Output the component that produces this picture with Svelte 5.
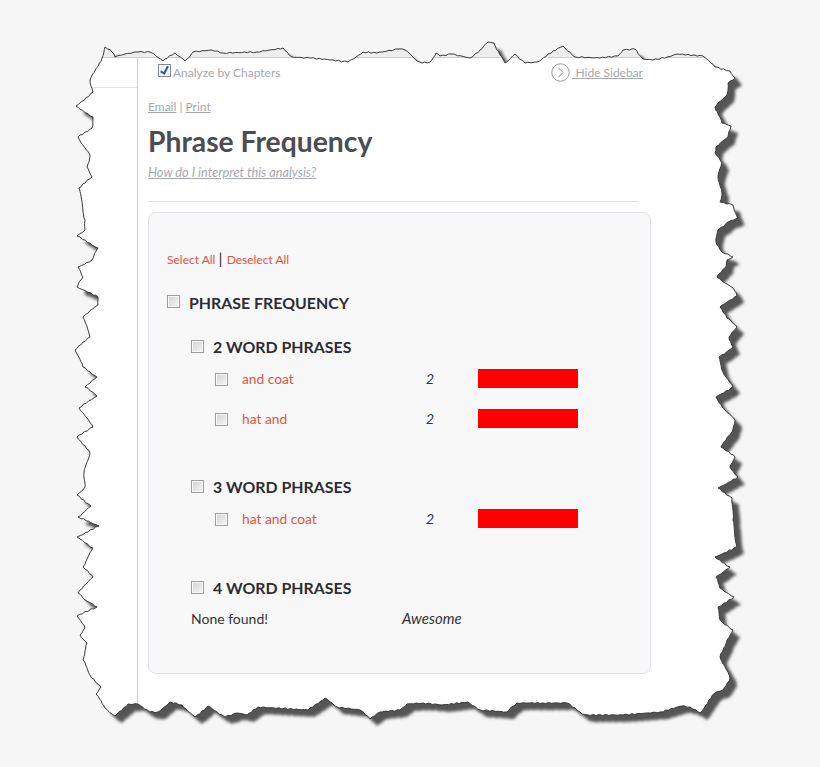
<script>
  const outline = [[105,47],[112,52],[115,57],[125,54],[138,52],[150,52],[163,61],[175,53],[185,61],[193,52],[212,50],[223,53],[257,52],[283,48],[292,57],[310,58],[333,60],[348,62],[363,52],[377,53],[398,49],[405,50],[410,54],[417,61],[422,63],[430,62],[436,53],[440,56],[452,54],[470,58],[480,50],[488,42],[494,43],[500,55],[505,63],[515,54],[525,63],[538,62],[548,54],[563,46],[575,57],[600,58],[618,56],[623,50],[635,49],[643,59],[653,60],[667,57],[677,54],[703,56],[715,67],[730,71],[735,78],[728,83],[727,95],[715,107],[722,123],[731,126],[728,137],[716,147],[715,153],[722,163],[718,177],[722,193],[720,202],[733,205],[738,218],[728,222],[718,230],[716,242],[722,252],[733,257],[727,260],[726,267],[717,277],[725,283],[733,288],[737,296],[720,307],[727,318],[737,327],[729,337],[733,347],[719,357],[723,372],[733,387],[716,397],[725,410],[735,420],[732,432],[721,447],[735,457],[730,467],[738,477],[718,488],[732,498],[733,520],[737,547],[715,557],[730,567],[716,577],[720,588],[734,597],[718,607],[720,620],[733,630],[727,640],[720,657],[728,672],[730,678],[723,690],[715,693],[700,713],[690,707],[682,706],[660,712],[623,715],[588,715],[582,714],[567,703],[543,703],[517,703],[507,712],[480,710],[468,702],[442,705],[423,703],[407,704],[400,710],[380,712],[370,719],[360,710],[337,707],[325,698],[308,710],[258,707],[247,715],[237,713],[225,717],[208,706],[195,717],[182,705],[170,702],[158,712],[150,712],[138,704],[128,704],[115,716],[105,708],[96,694],[101,687],[90,675],[83,660],[87,643],[80,635],[85,628],[77,616],[97,607],[85,600],[78,593],[93,577],[83,567],[93,548],[77,537],[99,526],[78,517],[91,506],[77,495],[85,487],[84,473],[90,453],[77,437],[93,427],[79,408],[97,396],[85,387],[97,377],[83,367],[75,350],[90,337],[83,317],[98,305],[98,297],[77,287],[83,277],[78,267],[92,260],[98,248],[77,236],[85,230],[85,220],[79,188],[92,177],[87,167],[90,155],[78,137],[92,128],[93,117],[76,106],[93,92],[90,80],[102,58]];

  function rough(points) {
    let d = '';
    let seed = 1;
    points.forEach((p, i) => {
      const q = points[(i + 1) % points.length];
      const steps = Math.max(1, Math.round(Math.hypot(q[0] - p[0], q[1] - p[1]) / 3));
      for (let s = 0; s < steps; s++) {
        const t = s / steps;
        seed += 1;
        const nx = s === 0 ? 0 : Math.sin(seed * 12.9898) * 0.6;
        const ny = s === 0 ? 0 : Math.sin(seed * 78.233) * 0.6;
        const x = p[0] + (q[0] - p[0]) * t + nx;
        const y = p[1] + (q[1] - p[1]) * t + ny;
        d += (d ? 'L' : 'M') + x.toFixed(1) + ' ' + y.toFixed(1);
      }
    });
    return d + 'Z';
  }
  const edge = rough(outline);

  const groups = [
    { title: '2 WORD PHRASES', rows: ['and coat', 'hat and'] },
    { title: '3 WORD PHRASES', rows: ['hat and coat'] },
    { title: '4 WORD PHRASES', rows: [] }
  ];
</script>

<div class="page">
  <svg class="paper" width="820" height="767" viewBox="0 0 820 767" aria-hidden="true">
    <defs>
      <filter id="soft" x="-5%" y="-5%" width="110%" height="110%"><feGaussianBlur stdDeviation="1.6" /></filter>
      <clipPath id="sheet"><path d={edge} /></clipPath>
    </defs>
    <path d={edge} transform="translate(7 7)" fill="#555" filter="url(#soft)" />
    <path d={edge} fill="#fff" />
    <g clip-path="url(#sheet)">
      <rect x="60" y="30" width="700" height="27" fill="#ededed" />
      <rect x="60" y="57" width="700" height="1" fill="#cfcfcf" />
    </g>
    <path d={edge} fill="none" stroke="#383838" stroke-width="1" />
  </svg>

  <div class="sheet">
    <aside class="sidebar"><div class="sidebar-head"></div></aside>
    <main class="main">
      <div class="toolbar">
        <label class="analyze"><input class="check" type="checkbox" checked /><span>Analyze by Chapters</span></label>
        <a class="hide" href="#hide">
          <svg width="19" height="19" viewBox="0 0 19 19" aria-hidden="true">
            <circle cx="9.5" cy="9.5" r="8.7" fill="#fff" stroke="#9a9a9a" stroke-width="1" />
            <path d="M7.5 4.8 L12 9.5 L7.5 14.2" fill="none" stroke="#8a8a8a" stroke-width="1" />
          </svg>
          <span class="hide-text">&nbsp;Hide Sidebar</span>
        </a>
      </div>
      <div class="links"><a href="#email">Email</a> | <a href="#print">Print</a></div>
      <h1>Phrase Frequency</h1>
      <a class="help" href="#help">How do I interpret this analysis?</a>
      <hr />
      <section class="panel">
        <div class="select"><a href="#all">Select All</a> <span class="bar-sep">|</span> <a href="#none">Deselect All</a></div>
        <div class="heading top"><input class="check" type="checkbox" /><span>PHRASE FREQUENCY</span></div>
        {#each groups as g, i}
          <div class="group" class:first={i === 0} class:last={i === 2}>
            <div class="heading"><input class="check" type="checkbox" /><span>{g.title}</span></div>
            {#each g.rows as r}
              <div class="row">
                <input class="check" type="checkbox" />
                <a class="label" href="#phrase">{r}</a>
                <em class="count">2</em>
                <span class="bar"></span>
              </div>
            {/each}
            {#if g.rows.length === 0}
              <div class="none"><span class="none-label">None found!</span><em class="awesome">Awesome</em></div>
            {/if}
          </div>
        {/each}
      </section>
    </main>
  </div>
</div>

<style>
  :global(body) { margin: 0; background: #f6f6f6; }
  .page {
    position: relative;
    width: 820px;
    height: 767px;
    overflow: hidden;
    background: #f6f6f6;
    font-family: Lato, "Liberation Sans", sans-serif;
    font-size: 14px;
    color: #333;
  }
  .paper { position: absolute; left: 0; top: 0; }
  .sheet { position: relative; display: flex; padding: 58px 0 0 92px; }
  .sidebar {
    width: 45px;
    height: 645px;
    border-right: 1px solid #cdd0d4;
  }
  .sidebar-head { height: 29px; border-bottom: 1px solid #dde3ea; }
  .main { width: 503px; padding-left: 10px; }
  .toolbar {
    display: flex;
    justify-content: space-between;
    align-items: center;
    width: 495px;
    height: 28px;
  }
  .analyze {
    display: flex;
    align-items: center;
    gap: 2px;
    margin-left: 10px;
    font-size: 12px;
    color: #a6a8ac;
  }
  .hide {
    display: flex;
    align-items: center;
    gap: 2px;
    font-size: 12px;
    color: #a6a8ac;
  }
  .hide-text { text-decoration: underline; }
  .links {
    margin-top: 13px;
    font-size: 12px;
    line-height: 16px;
    color: #a6a8ac;
  }
  a { color: inherit; }
  h1 {
    margin: 9px 0 0;
    font-size: 28.3px;
    line-height: 34px;
    font-weight: 700;
    color: #4b4d52;
  }
  .help {
    display: block;
    margin-top: 6px;
    font-size: 12.75px;
    line-height: 16px;
    font-style: italic;
    color: #a6a8ac;
  }
  hr {
    width: 490px;
    height: 1px;
    margin: 21px 0 0;
    border: 0;
    background: #dfe3e8;
  }
  .panel {
    box-sizing: border-box;
    width: 503px;
    height: 462px;
    margin-top: 10px;
    padding: 37px 18px 0;
    background: #f8f8f9;
    border: 1px solid #dde2e8;
    border-radius: 8px;
  }
  .select {
    font-size: 12px;
    line-height: 20px;
    color: #e5533f;
  }
  .select a { text-decoration: none; }
  .bar-sep { font-size: 16px; line-height: 1; color: #333; margin: 0 1px 0 0; }
  .heading {
    display: flex;
    align-items: center;
    gap: 9px;
    height: 24px;
    font-size: 15.9px;
    font-weight: 700;
    color: #2d2d31;
  }
  .heading.top { margin-top: 20px; }
  .group { margin: 46px 0 0 24px; }
  .group.first { margin-top: 20px; }
  .group.last { margin-top: 47px; }
  .row {
    display: flex;
    align-items: center;
    height: 20px;
    margin: 10px 0 20px 24px;
  }
  .row + .row { margin-top: 0; }
  .row:last-child { margin-bottom: 1px; }
  .label { width: 184px; color: #e5533f; font-size: 13.8px; text-decoration: none; }
  .count { width: 52px; color: #333; }
  .bar { width: 100px; height: 19px; background: #ff0000; }
  .none { display: flex; align-items: center; height: 20px; margin-top: 9px; color: #333; }
  .none-label { width: 211px; }
  .awesome { font-size: 15px; }
  .check {
    appearance: none;
    position: relative;
    flex: none;
    box-sizing: border-box;
    width: 13px;
    height: 13px;
    margin: 0;
    border: 1px solid #9e9e9e;
    background: linear-gradient(135deg, #d2d2d2, #f6f6f6);
    box-shadow: inset 0 0 0 1px #f8f8f8;
  }
  .analyze .check { margin-bottom: 4px; }
  .heading.top .check { margin-bottom: 2px; }
  .row .check { margin: 2px 14px 0 0; }
  .check:checked {
    border-color: #7d8798;
    background: #eef0f4;
  }
  .check:checked::after {
    content: "";
    position: absolute;
    left: 3px;
    top: 0;
    box-sizing: border-box;
    width: 5px;
    height: 9px;
    border: solid #36549a;
    border-width: 0 2px 2px 0;
    transform: rotate(28deg);
  }
</style>
